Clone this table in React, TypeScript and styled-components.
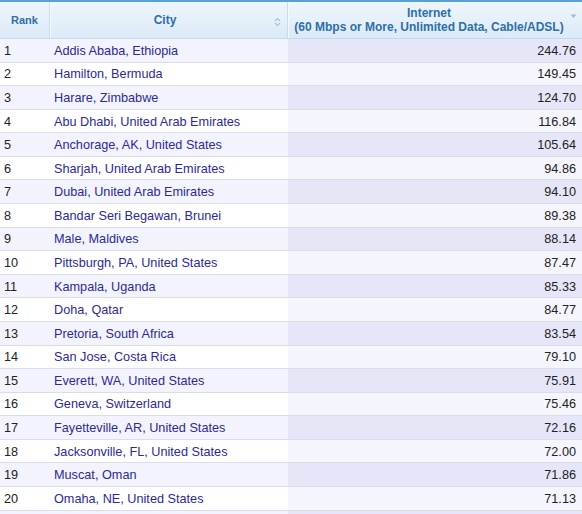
import React from "react";
import styled, { createGlobalStyle } from "styled-components";

const Global = createGlobalStyle`
  html, body { margin: 0; padding: 0; background: #fff; }
  body { font-family: "Liberation Sans", Arial, sans-serif; overflow: hidden; }
`;

const Table = styled.div`
  width: 582px;
  display: flex;
  flex-direction: column;
`;

const HeaderRow = styled.div`
  display: grid;
  grid-template-columns: 50px 238px 1fr;
  height: 39px;
  box-sizing: border-box;
  border-top: 2px solid #5b9fd8;
  border-bottom: 1px solid #c7d9ea;
  background: linear-gradient(#eef6fd, #dbeaf7);
`;

const HeadCell = styled.div<{ $size: number; $pr?: number; $last?: boolean }>`
  position: relative;
  display: flex;
  align-items: center;
  justify-content: center;
  text-align: center;
  font-weight: bold;
  font-size: ${(p) => p.$size}px;
  line-height: 14px;
  color: #2f6fa6;
  box-sizing: border-box;
  padding-right: ${(p) => p.$pr ?? 0}px;
  border-right: ${(p) => (p.$last ? "none" : "1px solid #c9dcee")};
  box-shadow: ${(p) => (p.$last ? "none" : "1px 0 0 #f4f9fe")};
`;

const SortIcon = styled.svg`
  position: absolute;
  right: 6px;
  top: 15px;
`;

const DescIcon = styled.svg`
  position: absolute;
  right: 5px;
  top: 12px;
`;

const Row = styled.div<{ $odd: boolean }>`
  display: grid;
  grid-template-columns: 50px 238px 1fr;
  height: 23.58px;
  box-sizing: border-box;
  padding-top: 1px;
  border-bottom: 1px solid #dcdce6;
  background: ${(p) => (p.$odd ? "#f3f3fd" : "#ffffff")};
  font-size: 12.7px;
`;

const RankCell = styled.div`
  display: flex;
  align-items: center;
  padding-left: 4px;
  color: #222;
`;

const CityCell = styled.div`
  display: flex;
  align-items: center;
  padding-left: 4px;
  color: #2b2b96;
`;

const ValueCell = styled.div<{ $odd: boolean }>`
  display: flex;
  align-items: center;
  justify-content: flex-end;
  padding-right: 6px;
  margin-top: -1px;
  padding-top: 1px;
  color: #222;
  background: ${(p) => (p.$odd ? "#e5e7f9" : "#f5f6fd")};
`;

const data: [string, string][] = [
  ["Addis Ababa, Ethiopia", "244.76"],
  ["Hamilton, Bermuda", "149.45"],
  ["Harare, Zimbabwe", "124.70"],
  ["Abu Dhabi, United Arab Emirates", "116.84"],
  ["Anchorage, AK, United States", "105.64"],
  ["Sharjah, United Arab Emirates", "94.86"],
  ["Dubai, United Arab Emirates", "94.10"],
  ["Bandar Seri Begawan, Brunei", "89.38"],
  ["Male, Maldives", "88.14"],
  ["Pittsburgh, PA, United States", "87.47"],
  ["Kampala, Uganda", "85.33"],
  ["Doha, Qatar", "84.77"],
  ["Pretoria, South Africa", "83.54"],
  ["San Jose, Costa Rica", "79.10"],
  ["Everett, WA, United States", "75.91"],
  ["Geneva, Switzerland", "75.46"],
  ["Fayetteville, AR, United States", "72.16"],
  ["Jacksonville, FL, United States", "72.00"],
  ["Muscat, Oman", "71.86"],
  ["Omaha, NE, United States", "71.13"],
  ["", ""],
];

export default function App() {
  return (
    <>
      <Global />
      <Table>
        <HeaderRow>
          <HeadCell $size={11}>Rank</HeadCell>
          <HeadCell $size={12} $pr={7}>
            City
            <SortIcon width="7" height="10" viewBox="0 0 7 10">
              <path d="M1 4 L3.5 1.5 L6 4 M1 6 L3.5 8.5 L6 6" fill="none" stroke="#a9c3dc" strokeWidth="1.2" />
            </SortIcon>
          </HeadCell>
          <HeadCell $size={12} $pr={12} $last>
            <span>
              Internet
              <br />
              (60 Mbps or More, Unlimited Data, Cable/ADSL)
            </span>
            <DescIcon width="7" height="5" viewBox="0 0 7 5">
              <path d="M0.5 0.5 L6.5 0.5 L3.5 4 Z" fill="#9fbcd8" />
            </DescIcon>
          </HeadCell>
        </HeaderRow>
        {data.map(([city, val], i) => {
          const odd = i % 2 === 0;
          return (
            <Row key={i} $odd={odd}>
              <RankCell>{city ? i + 1 : ""}</RankCell>
              <CityCell>{city}</CityCell>
              <ValueCell $odd={odd}>{val}</ValueCell>
            </Row>
          );
        })}
      </Table>
    </>
  );
}
